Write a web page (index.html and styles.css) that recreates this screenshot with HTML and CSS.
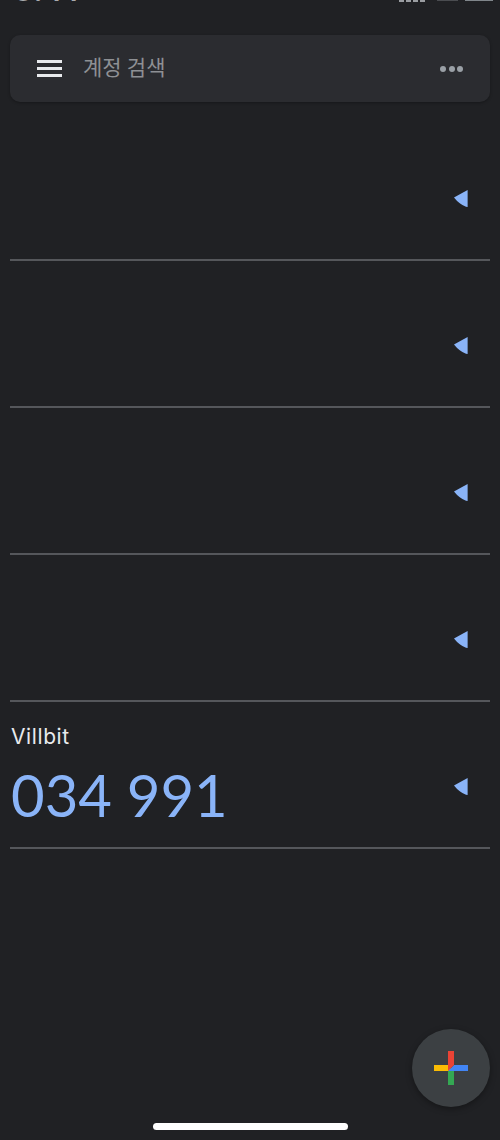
FILE: index.html
```html
<!DOCTYPE html>
<html lang="ko">
<head>
    <meta charset="UTF-8">
    <meta name="viewport" content="width=device-width, initial-scale=1.0">
    <title>Authenticator</title>
    <link rel="stylesheet" href="styles.css">
</head>
<body>
    <div class="phone">
        <div class="status-bar">
            <span class="clock">3:41</span>
            <div class="status-icons">
                <span class="signal"><i></i><i></i><i></i><i></i></span>
                <span class="wifi"></span>
                <span class="battery"></span>
            </div>
        </div>

        <header class="search-bar">
            <div class="menu-icon"><span></span><span></span><span></span></div>
            <span class="search-text">계정 검색</span>
            <div class="more-icon"><span></span><span></span><span></span></div>
        </header>

        <ul class="accounts">
            <li class="account">
                <div class="account-info"></div>
                <svg class="timer" viewBox="0 0 14 17"><path d="M0 7.5 L13.6 0 V17 L12 16.8 Q5 14 0 7.5 Z"/></svg>
            </li>
            <li class="account">
                <div class="account-info"></div>
                <svg class="timer" viewBox="0 0 14 17"><path d="M0 7.5 L13.6 0 V17 L12 16.8 Q5 14 0 7.5 Z"/></svg>
            </li>
            <li class="account">
                <div class="account-info"></div>
                <svg class="timer" viewBox="0 0 14 17"><path d="M0 7.5 L13.6 0 V17 L12 16.8 Q5 14 0 7.5 Z"/></svg>
            </li>
            <li class="account">
                <div class="account-info"></div>
                <svg class="timer" viewBox="0 0 14 17"><path d="M0 7.5 L13.6 0 V17 L12 16.8 Q5 14 0 7.5 Z"/></svg>
            </li>
            <li class="account">
                <div class="account-info">
                    <div class="account-name">Villbit</div>
                    <div class="account-code">034 991</div>
                </div>
                <svg class="timer" viewBox="0 0 14 17"><path d="M0 7.5 L13.6 0 V17 L12 16.8 Q5 14 0 7.5 Z"/></svg>
            </li>
        </ul>

        <button class="fab">
            <svg viewBox="0 0 34 34" width="34" height="34">
                <rect x="14" y="17" width="6" height="17" fill="#34a853"/>
                <rect x="0" y="14" width="16" height="6" fill="#fbbc04"/>
                <path d="M20 14 H34 V20 H14 Z" fill="#4285f4"/>
                <path d="M14 0 H20 V14 L14 20 Z" fill="#ea4335"/>
            </svg>
        </button>

        <div class="home-indicator"></div>
    </div>
</body>
</html>
```

FILE: styles.css
```css
body {
    margin: 0;
    background-color: #202124;
    font-family: Roboto, "Noto Sans CJK KR", sans-serif;
}
.phone {
    position: relative;
    width: 500px;
    height: 1140px;
    overflow: hidden;
    background-color: #202124;
}
.status-bar {
    height: 35px;
    display: flex;
    justify-content: space-between;
    padding: 0 7px 0 14px;
    box-sizing: border-box;
}
.clock {
    margin-top: -22px;
    height: 24px;
    color: #a9abae;
    font-size: 33px;
    font-weight: 500;
    line-height: 24px;
    letter-spacing: 1px;
}
.status-icons {
    display: flex;
    gap: 7px;
    align-items: flex-start;
}
.signal {
    display: flex;
    gap: 2px;
    margin-right: 5px;
}
.signal i {
    width: 5px;
    height: 2px;
    background: #9a9da1;
}
.wifi {
    width: 21px;
    height: 1px;
    background: #4a4c50;
}
.battery {
    width: 28px;
    height: 1px;
    background: #80868b;
}
.search-bar {
    height: 67px;
    margin: 0 10px;
    padding: 0 27px 0 27px;
    display: flex;
    align-items: center;
    background-color: #2b2c30;
    border-radius: 10px;
    box-shadow: 0 1px 3px rgba(0, 0, 0, 0.3);
}
.menu-icon {
    width: 25px;
    display: flex;
    flex-direction: column;
    gap: 4px;
}
.menu-icon span {
    height: 3px;
    background: #e8eaed;
}
.search-text {
    margin: 0 0 5px 21px;
    color: #8e9094;
    font-size: 21px;
    flex: 1;
}
.more-icon {
    display: flex;
    gap: 2.5px;
}
.more-icon span {
    width: 6px;
    height: 6px;
    border-radius: 50%;
    background: #9aa0a6;
}
.accounts {
    list-style: none;
    margin: 12px 10px 0;
    padding: 0;
}
.account {
    height: 147px;
    box-sizing: border-box;
    display: flex;
    justify-content: space-between;
    align-items: center;
    border-bottom: 2px solid #55575b;
    padding: 24px 22px 0 0;
}
.account-info {
    align-self: flex-start;
    padding-left: 1px;
}
.account-name {
    margin-top: -3px;
    color: #e8eaed;
    font-family: Inter, sans-serif;
    font-size: 21px;
    line-height: 28px;
    letter-spacing: 0.6px;
}
.account-code {
    margin-top: 11px;
    margin-left: 0;
    color: #8ab4f8;
    font-family: Lato, sans-serif;
    font-size: 58px;
    line-height: 66px;
    font-weight: 400;
}
.timer {
    width: 14px;
    height: 17px;
    fill: #8ab4f8;
}
.fab {
    position: absolute;
    left: 412px;
    top: 1029px;
    width: 78px;
    height: 78px;
    padding: 0;
    border: none;
    border-radius: 50%;
    background: #3c4043;
    box-shadow: 0 2px 6px rgba(0, 0, 0, 0.35);
    display: flex;
    align-items: center;
    justify-content: center;
}
.home-indicator {
    position: absolute;
    left: 153px;
    top: 1123px;
    width: 195px;
    height: 7px;
    border-radius: 4px;
    background: #fff;
}
```
